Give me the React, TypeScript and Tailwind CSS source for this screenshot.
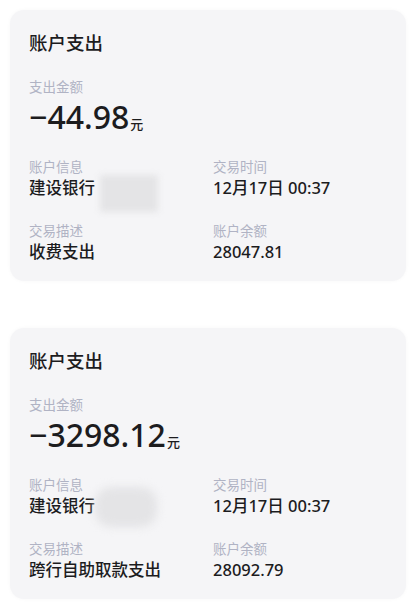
import React from 'react';

type Record = {
  amount: string;
  desc: string;
  time: string;
  balance: string;
  blob: 'box' | 'cloud';
};

const records: Record[] = [
  { amount: '−44.98', desc: '收费支出', time: '12月17日 00:37', balance: '28047.81', blob: 'box' },
  { amount: '−3298.12', desc: '跨行自助取款支出', time: '12月17日 00:37', balance: '28092.79', blob: 'cloud' },
];

const font = { fontFamily: '"Noto Sans", "Noto Sans CJK SC", sans-serif' };

function Label({ children }: { children: React.ReactNode }) {
  return <div className="text-[13.5px] leading-[18px] text-[#b0b3c4]">{children}</div>;
}

function Value({ children }: { children: React.ReactNode }) {
  return <div className="mt-[1px] text-[16.5px] font-medium leading-[22px] text-[#1c1c1e]">{children}</div>;
}

function ExpenseCard({ r }: { r: Record }) {
  return (
    <div className="rounded-[14px] bg-[#f5f5f7] px-[19px] pt-[20px] pb-[18px] shadow-[0_0_4px_rgba(0,0,0,0.03)]">
      <div className="text-[18.5px] font-medium leading-[26px] text-[#1c1c1e]">账户支出</div>

      <div className="mt-[22px]">
        <Label>支出金额</Label>
      </div>
      <div className="mt-[3px] flex h-[36px] items-baseline text-[#1c1c1e]">
        <span className="text-[32px] font-medium leading-[36px]">{r.amount}</span>
        <span className="ml-[1px] text-[13px] font-medium leading-none">元</span>
      </div>

      <div className="mt-[23px] grid grid-cols-[184px_1fr] gap-y-[23px]">
        <div>
          <Label>账户信息</Label>
          <div className="relative">
            <Value>建设银行</Value>
            {r.blob === 'box' ? (
              <div className="absolute left-[71px] top-[-2px] h-[37px] w-[58px] rounded-[2px] bg-[#e4e4e6] blur-[3px]" />
            ) : (
              <div className="absolute left-[66px] top-[-8px] h-[40px] w-[62px] rounded-[16px] bg-[#e4e4e6] blur-[4px]" />
            )}
          </div>
        </div>
        <div>
          <Label>交易时间</Label>
          <Value>{r.time}</Value>
        </div>
        <div>
          <Label>交易描述</Label>
          <Value>{r.desc}</Value>
        </div>
        <div>
          <Label>账户余额</Label>
          <Value>{r.balance}</Value>
        </div>
      </div>
    </div>
  );
}

export default function App() {
  return (
    <div className="min-h-[615px] w-[417px] bg-white pl-[10px] pr-[11px] pt-[10px]" style={font}>
      <div className="flex flex-col gap-[47px]">
        {records.map((r) => (
          <ExpenseCard key={r.amount} r={r} />
        ))}
      </div>
    </div>
  );
}
